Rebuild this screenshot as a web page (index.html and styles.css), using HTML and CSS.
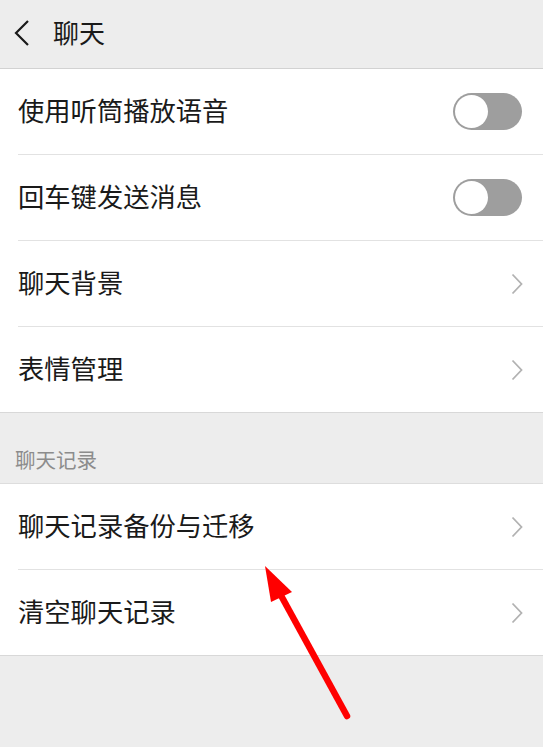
FILE: index.html
```html
<!DOCTYPE html>
<html lang="zh">
<head>
<meta charset="utf-8">
<link rel="stylesheet" href="styles.css">
</head>
<body>
<div class="page">
  <header class="topbar">
    <svg class="back" width="18" height="28" viewBox="0 0 18 28"><path d="M15 2 L3 14 L15 26" fill="none" stroke="#1a1a1a" stroke-width="2.2"/></svg>
    <span class="title">聊天</span>
  </header>

  <section class="group first">
    <div class="row"><div class="cell"><span class="label">使用听筒播放语音</span><span class="switch"><span class="knob"></span></span></div></div>
    <div class="row"><div class="cell"><span class="label">回车键发送消息</span><span class="switch"><span class="knob"></span></span></div></div>
    <div class="row"><div class="cell"><span class="label">聊天背景</span><svg class="chev" width="12" height="22" viewBox="0 0 12 22"><path d="M1.5 1.5 L10.5 11 L1.5 20.5" fill="none" stroke="#b2b2b2" stroke-width="1.8"/></svg></div></div>
    <div class="row"><div class="cell last"><span class="label">表情管理</span><svg class="chev" width="12" height="22" viewBox="0 0 12 22"><path d="M1.5 1.5 L10.5 11 L1.5 20.5" fill="none" stroke="#b2b2b2" stroke-width="1.8"/></svg></div></div>
  </section>

  <div class="section-title">聊天记录</div>

  <section class="group second">
    <div class="row"><div class="cell"><span class="label">聊天记录备份与迁移</span><svg class="chev" width="12" height="22" viewBox="0 0 12 22"><path d="M1.5 1.5 L10.5 11 L1.5 20.5" fill="none" stroke="#b2b2b2" stroke-width="1.8"/></svg></div></div>
    <div class="row"><div class="cell last"><span class="label">清空聊天记录</span><svg class="chev" width="12" height="22" viewBox="0 0 12 22"><path d="M1.5 1.5 L10.5 11 L1.5 20.5" fill="none" stroke="#b2b2b2" stroke-width="1.8"/></svg></div></div>
  </section>

  <svg class="arrow" width="543" height="747" viewBox="0 0 543 747">
    <line x1="347" y1="716" x2="278" y2="590" stroke="#ff0000" stroke-width="6.5" stroke-linecap="round"/>
    <polygon points="265,566 271,602 292,592" fill="#ff0000"/>
  </svg>
</div>
</body>
</html>
```

FILE: styles.css
```css
html, body {
  margin: 0;
  padding: 0;
  background: #ededed;
}
.page {
  position: relative;
  width: 543px;
  height: 747px;
  overflow: hidden;
  font-family: "Noto Sans CJK SC", "Noto Sans", sans-serif;
  color: #1a1a1a;
}
.topbar {
  height: 68px;
  border-bottom: 1px solid #d2d2d2;
  display: flex;
  align-items: center;
  padding-left: 13px;
  box-sizing: content-box;
}
.back {
  display: block;
  margin-top: -3px;
}
.title {
  font-size: 26px;
  line-height: 1;
  margin-left: 22px;
  margin-top: -4px;
}
.group {
  background: #ffffff;
  border-bottom: 1px solid #d8d8d8;
}
.group.second {
  border-top: 1px solid #dddddd;
}
.row {
  padding-left: 18px;
}
.cell {
  height: 85px;
  border-bottom: 1px solid #e2e2e2;
  display: flex;
  align-items: center;
  justify-content: space-between;
  padding-right: 21px;
}
.cell.last {
  border-bottom: none;
}
.label {
  font-size: 26.3px;
  line-height: 1;
  margin-top: -3px;
}
.switch {
  width: 69px;
  height: 37px;
  border-radius: 19px;
  background: #9e9e9e;
  display: flex;
  align-items: center;
  padding-left: 2px;
  box-sizing: border-box;
}
.knob {
  width: 33px;
  height: 33px;
  border-radius: 50%;
  background: #ffffff;
}
.chev {
  display: block;
  margin-right: -1px;
}
.section-title {
  height: 70px;
  box-sizing: border-box;
  display: flex;
  align-items: flex-end;
  padding: 0 0 14px 15px;
  font-size: 20.5px;
  line-height: 1;
  color: #8c8c8c;
}
.arrow {
  position: absolute;
  left: 0;
  top: 0;
  pointer-events: none;
}
```
